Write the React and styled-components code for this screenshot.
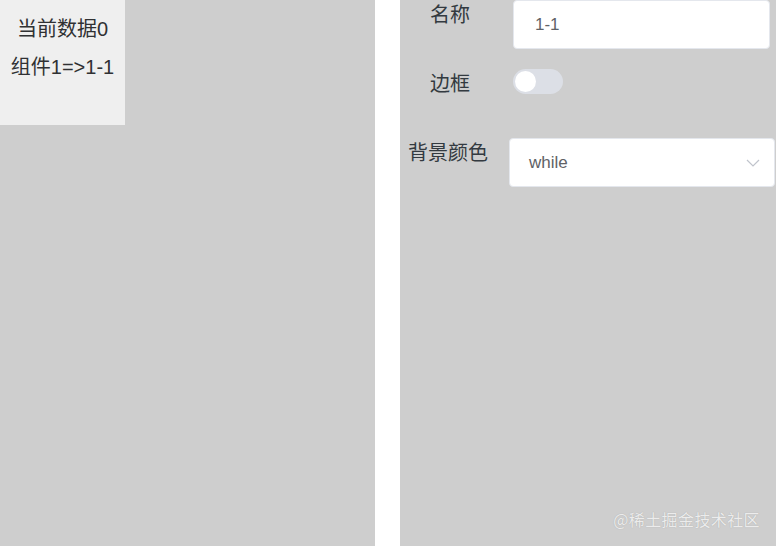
import React from "react";
import styled, { createGlobalStyle } from "styled-components";

const GlobalStyle = createGlobalStyle`
  html, body {
    margin: 0;
    padding: 0;
    background: #cecece;
    font-family: "Liberation Sans", "Noto Sans CJK SC", sans-serif;
  }
`;

const Page = styled.div`
  position: relative;
  display: flex;
  width: 776px;
  height: 546px;
  overflow: hidden;
  background: #cecece;
`;

const Canvas = styled.div`
  width: 375px;
  flex: none;
`;

const Card = styled.div`
  width: 125px;
  height: 125px;
  box-sizing: border-box;
  padding-top: 10px;
  background: #efefef;
  color: #303133;
  font-size: 20px;
  line-height: 38px;
  text-align: center;
`;

const Divider = styled.div`
  width: 25px;
  flex: none;
  background: #ffffff;
`;

const Panel = styled.div`
  flex: 1;
  display: flex;
  flex-direction: column;
  gap: 20px;
  padding-right: 1px;
`;

const Row = styled.div`
  display: flex;
  gap: 13px;
  height: 49px;
`;

const Label = styled.div`
  width: ${p => p.$width}px;
  flex: none;
  text-align: center;
  font-size: 20px;
  line-height: 30px;
  color: #333a40;
`;

const Field = styled.div`
  flex: 1;
  margin-right: ${p => p.$right}px;
`;

const Input = styled.div`
  height: 49px;
  box-sizing: border-box;
  background: #ffffff;
  border: 1px solid #e4e7ed;
  border-radius: 4px;
  padding-left: 21px;
  display: flex;
  align-items: center;
  font-size: 17px;
  color: #606266;
`;

const SelectBox = styled(Input)`
  justify-content: space-between;
  padding: 0 14px 0 19px;
`;

const Switch = styled.div`
  width: 50px;
  height: 25px;
  border-radius: 13px;
  background: #dcdfe6;
  position: relative;
`;

const Knob = styled.span`
  position: absolute;
  top: 2px;
  left: 2px;
  width: 21px;
  height: 21px;
  border-radius: 50%;
  background: #ffffff;
`;

const Watermark = styled.div`
  position: absolute;
  right: 16px;
  bottom: 15px;
  font-family: "Noto Sans CJK SC", sans-serif;
  font-size: 16px;
  letter-spacing: 0.4px;
  color: #ececec;
  text-shadow: 0 0 1px #a0a0a0;
`;

const Chevron = () => (
  <svg width="14" height="8" viewBox="0 0 14 8" fill="none">
    <path d="M1 1l6 6 6-6" stroke="#c0c4cc" strokeWidth="1.2" />
  </svg>
);

export default function App() {
  return (
    <Page>
      <GlobalStyle />
      <Canvas>
        <Card>
          <div>当前数据0</div>
          <div>组件1=&gt;1-1</div>
        </Card>
      </Canvas>
      <Divider />
      <Panel>
        <Row>
          <Label $width={100}>名称</Label>
          <Field $right={5}>
            <Input>1-1</Input>
          </Field>
        </Row>
        <Row>
          <Label $width={100}>边框</Label>
          <Field $right={5}>
            <Switch>
              <Knob />
            </Switch>
          </Field>
        </Row>
        <Row>
          <Label $width={96}>背景颜色</Label>
          <Field $right={0}>
            <SelectBox>
              <span>while</span>
              <Chevron />
            </SelectBox>
          </Field>
        </Row>
      </Panel>
      <Watermark>@稀土掘金技术社区</Watermark>
    </Page>
  );
}
